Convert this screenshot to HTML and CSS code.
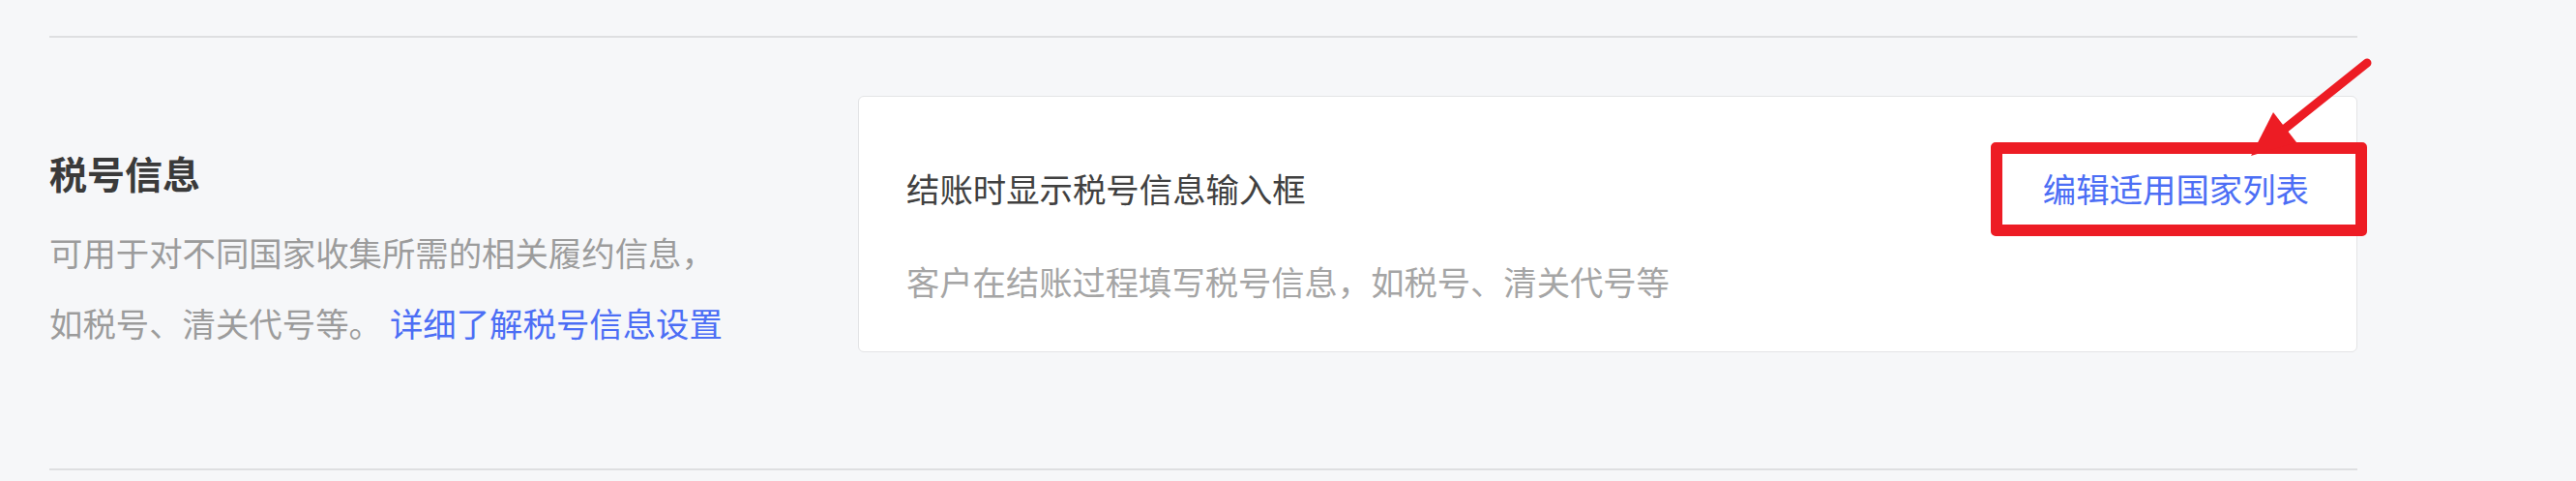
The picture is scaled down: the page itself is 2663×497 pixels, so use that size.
FILE: index.html
```html
<!DOCTYPE html>
<html lang="zh-CN">
<head>
    <meta charset="UTF-8">
    <meta name="viewport" content="width=device-width, initial-scale=1.0">
    <title>税号信息</title>
    <link rel="stylesheet" href="styles.css">
</head>
<body>
    <main class="page">
        <section class="section">
            <div class="section-info">
                <h2>税号信息</h2>
                <p>可用于对不同国家收集所需的相关履约信息，如税号、清关代号等。<a href="#" class="more-link">详细了解税号信息设置</a></p>
            </div>
            <div class="card">
                <div class="card-row">
                    <span class="card-title">结账时显示税号信息输入框</span>
                    <a href="#" class="card-link">编辑适用国家列表</a>
                </div>
                <p class="card-desc">客户在结账过程填写税号信息，如税号、清关代号等</p>
            </div>

            <!-- 标注 -->
            <div class="mark-box"></div>
            <svg class="mark-arrow" width="140" height="115" viewBox="0 0 140 115">
                <line x1="129" y1="10" x2="34" y2="86" stroke="#ed1c24" stroke-width="9" stroke-linecap="round"/>
                <polygon points="9,106 32,61 56,92" fill="#ed1c24"/>
            </svg>
        </section>
    </main>
</body>
</html>
```

FILE: styles.css
```css
body {
    margin: 0;
    padding: 0;
    background-color: #f6f7f9;
    font-family: "Noto Sans CJK SC", "Liberation Sans", sans-serif;
    color: #333;
}
.page {
    padding: 37px 0 0 51px;
}
.section {
    position: relative;
    width: 2386px;
    display: grid;
    grid-template-columns: 836px 1fr;
    align-items: start;
    padding: 60px 0 114px;
    border-top: 2px solid #dedfe1;
    border-bottom: 2px solid #dedfe1;
}
.section-info h2 {
    margin: 49px 0 0;
    font-size: 39px;
    line-height: 60px;
    font-weight: 700;
    color: #3a3a3a;
}
.section-info p {
    max-width: 712px;
    margin: 16px 0 0;
    font-size: 34.4px;
    line-height: 73px;
    color: #9c9c9c;
}
.more-link {
    margin-left: 8px;
}
a {
    color: #4c6ef5;
    text-decoration: none;
}
.card {
    background-color: #fff;
    border: 1px solid #e3e4e6;
    border-radius: 6px;
    padding: 70px 49px 49px;
}
.card-row {
    display: flex;
    justify-content: space-between;
    align-items: center;
    font-size: 34.4px;
    line-height: 48px;
}
.card-title {
    color: #404040;
}
.card-desc {
    margin: 48px 0 0;
    font-size: 34.3px;
    line-height: 48px;
    color: #a5a5a5;
}
.mark-box {
    position: absolute;
    left: 2007px;
    top: 108px;
    width: 365px;
    height: 73px;
    border: 12px solid #ed1c24;
    border-radius: 5px;
}
.mark-arrow {
    position: absolute;
    left: 2267px;
    top: 16px;
}
```
